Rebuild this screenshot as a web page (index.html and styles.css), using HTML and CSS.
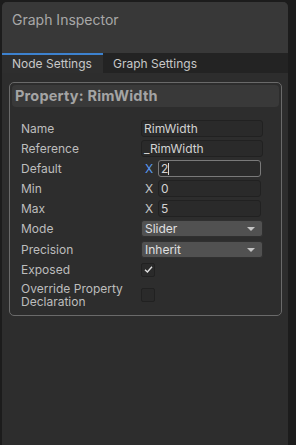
FILE: index.html
```html
<!DOCTYPE html>
<html lang="en">
<head>
    <meta charset="UTF-8">
    <title>Graph Inspector</title>
    <link rel="stylesheet" href="styles.css">
</head>
<body>
    <div class="panel">
        <div class="header">Graph Inspector</div>
        <div class="tabs">
            <div class="tab active">Node Settings</div>
            <div class="tab">Graph Settings</div>
        </div>
        <div class="content">
            <div class="box">
                <div class="box-title">Property: RimWidth</div>
                <div class="rows">
                    <div class="row">
                        <span class="label">Name</span>
                        <div class="field text">RimWidth</div>
                    </div>
                    <div class="row">
                        <span class="label">Reference</span>
                        <div class="field text">_RimWidth</div>
                    </div>
                    <div class="row">
                        <span class="label">Default</span>
                        <div class="vec">
                            <span class="axis focus">X</span>
                            <div class="field num focused">2<span class="caret"></span></div>
                        </div>
                    </div>
                    <div class="row">
                        <span class="label">Min</span>
                        <div class="vec">
                            <span class="axis">X</span>
                            <div class="field num">0</div>
                        </div>
                    </div>
                    <div class="row">
                        <span class="label">Max</span>
                        <div class="vec">
                            <span class="axis">X</span>
                            <div class="field num">5</div>
                        </div>
                    </div>
                    <div class="row drop-row">
                        <span class="label">Mode</span>
                        <div class="field drop">Slider<span class="arrow"></span></div>
                    </div>
                    <div class="row drop-row">
                        <span class="label">Precision</span>
                        <div class="field drop">Inherit<span class="arrow"></span></div>
                    </div>
                    <div class="row check-row">
                        <span class="label">Exposed</span>
                        <div class="check">
                            <svg width="11" height="11" viewBox="0 0 11 11"><path d="M2 5.8 L4.4 8 L9 2.8" fill="none" stroke="#e0e0e0" stroke-width="1.4"/></svg>
                        </div>
                    </div>
                    <div class="row tall">
                        <span class="label">Override Property Declaration</span>
                        <div class="check"></div>
                    </div>
                </div>
            </div>
        </div>
    </div>
</body>
</html>
```

FILE: styles.css
```css
body {
    margin: 0;
    background-color: #1c1c1c;
    font-family: Inter, "Noto Sans", sans-serif;
    font-size: 12px;
    color: #c4c4c4;
}

.panel {
    margin: 2px 8px 0 2px;
    height: 443px;
    background-color: #2d2d2d;
    border-radius: 5px 5px 0 0;
    overflow: hidden;
}

.header {
    height: 51px;
    background-color: #383838;
    padding: 9px 0 0 10px;
    box-sizing: border-box;
    font-size: 14px;
    color: #a8a8a8;
}

.tabs {
    display: flex;
    height: 20px;
    background-color: #232323;
}

.tab {
    padding: 3px 10px 0 10px;
    color: #c8c8c8;
    font-size: 12px;
}

.tab.active {
    width: 101px;
    box-sizing: border-box;
    background-color: #2e2e2e;
    border-top: 2px solid #3d82cf;
    padding-top: 1px;
}

.content {
    padding: 9px 6px 0 7px;
}

.box {
    border: 1px solid #6a6a6a;
    border-radius: 5px;
    padding: 2px 2px 7px 2px;
}

.box-title {
    background-color: #393939;
    border-radius: 4px;
    height: 22px;
    padding: 2px 0 0 3px;
    box-sizing: border-box;
    font-size: 14.5px;
    font-weight: bold;
    letter-spacing: 0.2px;
    color: #a4a4a4;
}

.rows {
    padding: 11px 0 0 9px;
}

.row {
    display: flex;
    align-items: center;
    height: 20px;
}

.row.drop-row {
    height: 21px;
}

.row.check-row {
    height: 19px;
}

.row.tall {
    height: 29px;
    align-items: flex-start;
    padding-top: 3px;
    box-sizing: border-box;
}

.label {
    width: 120px;
    flex-shrink: 0;
    color: #bdbdbd;
    line-height: 13px;
}

.tall .label {
    width: 118px;
    margin-right: 2px;
}

.field {
    height: 17px;
    box-sizing: border-box;
    border-radius: 3px;
    line-height: 15px;
    padding-left: 2px;
}

.text {
    width: 122px;
    background-color: #2a2a2a;
    border: 1px solid #212121;
    color: #d2d2d2;
}

.vec {
    display: flex;
    align-items: center;
}

.axis {
    width: 17px;
    padding-left: 4px;
    box-sizing: border-box;
    color: #c4c4c4;
}

.axis.focus {
    color: #5b9bf0;
}

.num {
    width: 103px;
    background-color: #2a2a2a;
    border: 1px solid #212121;
    color: #d2d2d2;
}

.focused {
    border-color: #7a7a7a;
}

.caret {
    display: inline-block;
    width: 1px;
    height: 12px;
    background-color: #d8d8d8;
    vertical-align: -2px;
}

.drop {
    position: relative;
    width: 122px;
    background-color: #515151;
    border: 1px solid #303030;
    color: #e0e0e0;
    padding-left: 3px;
}

.arrow {
    position: absolute;
    right: 7px;
    top: 6px;
    width: 0;
    height: 0;
    border-left: 4px solid transparent;
    border-right: 4px solid transparent;
    border-top: 4px solid #c4c4c4;
}

.check {
    width: 14px;
    height: 14px;
    box-sizing: border-box;
    background-color: #2a2a2a;
    border: 1px solid #212121;
    border-radius: 2px;
    display: flex;
    align-items: center;
    justify-content: center;
}

.tall .check {
    margin-top: 6px;
}
```
